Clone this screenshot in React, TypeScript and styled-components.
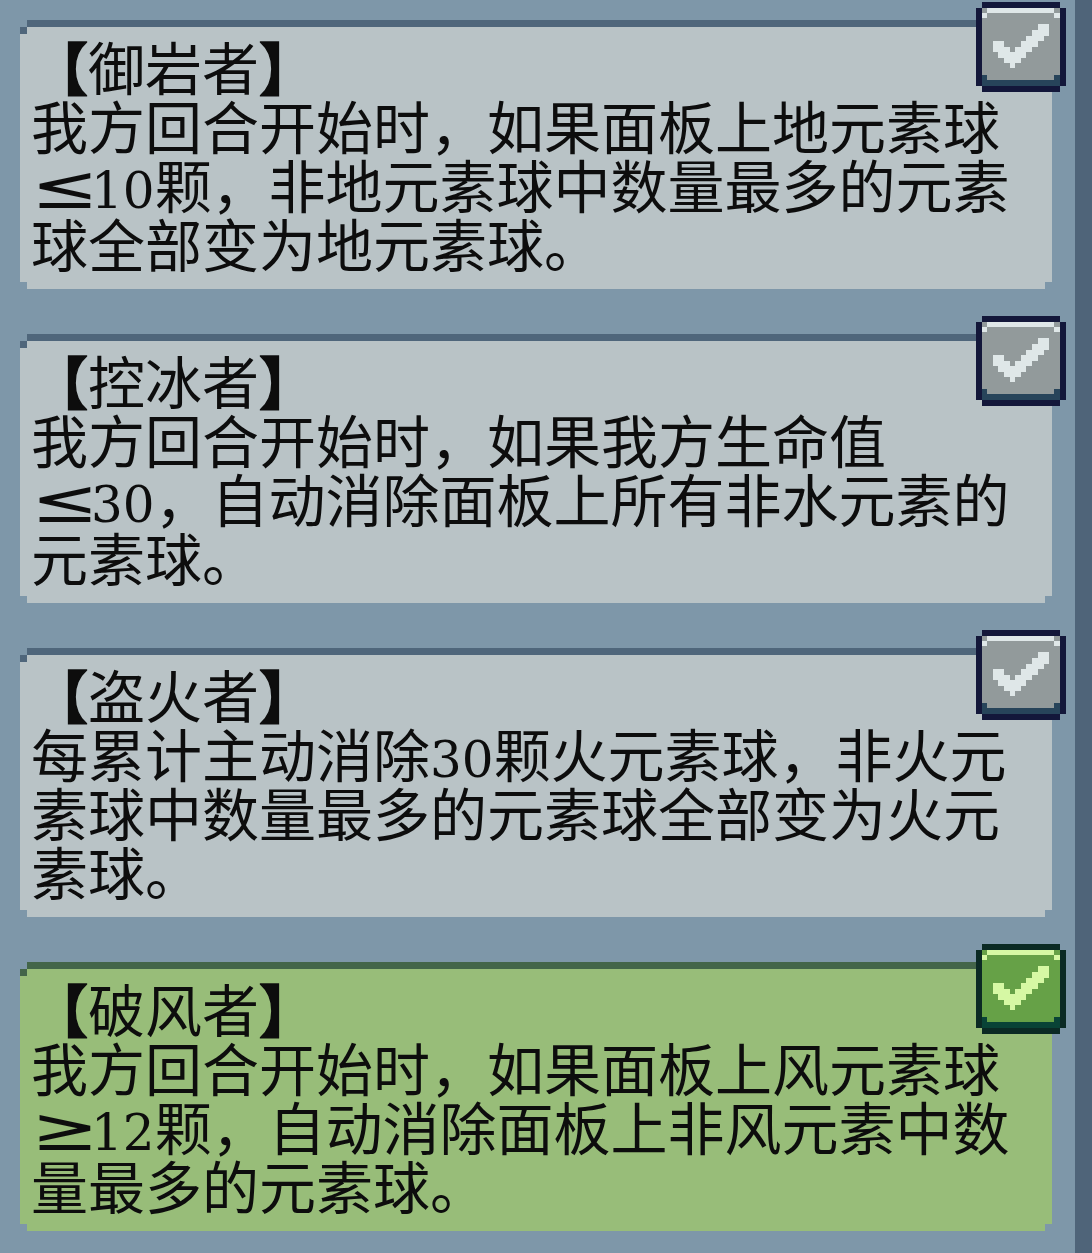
import styled, { createGlobalStyle } from 'styled-components';

const GlobalStyle = createGlobalStyle`
  html, body {
    margin: 0;
    padding: 0;
    background: #7e97a9;
    overflow: hidden;
  }
`;

const Screen = styled.div`
  display: flex;
  width: 1092px;
  height: 1253px;
  background: #7e97a9;
`;

const List = styled.div`
  flex: 1;
  display: flex;
  flex-direction: column;
  gap: 45px;
  padding: 20px 23px 0 20px;
`;

const ScrollTrack = styled.div`
  width: 17px;
  background: #4f6479;
`;

const CardWrap = styled.div`
  position: relative;
`;

type Tone = 'idle' | 'active';

const palette = {
  idle: { body: '#b9c3c6', edge: '#4f667b' },
  active: { body: '#98bd79', edge: '#436549' },
};

const Panel = styled.div<{ $tone: Tone }>`
  position: relative;
  height: 269px;
  box-sizing: border-box;
  padding: 9px 11px 0 11px;
  background: ${({ $tone }) => palette[$tone].body};
  border-top: 7px solid ${({ $tone }) => palette[$tone].edge};
  clip-path: polygon(
    7px 0, calc(100% - 7px) 0, calc(100% - 7px) 7px, 100% 7px,
    100% calc(100% - 7px), calc(100% - 7px) calc(100% - 7px),
    calc(100% - 7px) 100%, 7px 100%, 7px calc(100% - 7px),
    0 calc(100% - 7px), 0 7px, 7px 7px
  );

  &::before {
    content: '';
    position: absolute;
    left: 0;
    top: 0;
    width: 7px;
    height: 7px;
    background: ${({ $tone }) => palette[$tone].edge};
  }
`;

const Text = styled.div`
  font-family: "Noto Sans CJK SC", "Noto Sans", sans-serif;
  font-size: 57px;
  line-height: 59px;
  color: #0d0d0d;
  white-space: nowrap;
`;

const Line = styled.div`
  height: 59px;
`;

const Bracket = styled.span`
  display: inline-block;
  line-height: 59px;
  font-weight: 700;
  -webkit-text-stroke: 1.5px #0d0d0d;
`;

const Num = styled.span`
  display: inline-block;
  line-height: 59px;
  font-family: "DejaVu Serif", "Liberation Serif", serif;
  font-size: 50px;
`;

const Cmp = styled.span`
  display: inline-block;
  width: 60px;
  line-height: 59px;
  font-family: "DejaVu Sans", sans-serif;
  font-size: 60px;
  transform: scaleX(1.35);
  transform-origin: 0 50%;
`;

const CheckHolder = styled.div`
  position: absolute;
  top: -18px;
  right: -14px;
  width: 90px;
  height: 90px;
`;

const boxColors = {
  idle: { rim: '#13173a', fill: '#929a9b', light: '#dfe7e8', shade: '#27445a' },
  active: { rim: '#0b2a24', fill: '#66a147', light: '#d6f8a4', shade: '#094336' },
};

const tick: [number, number, number, number][] = [
  [62, 22, 11, 6],
  [56, 28, 17, 6],
  [50, 34, 18, 5],
  [17, 39, 11, 6],
  [45, 39, 17, 6],
  [17, 45, 17, 5],
  [39, 45, 17, 5],
  [22, 50, 28, 6],
  [28, 56, 17, 5],
  [34, 61, 5, 5],
];

function CheckBox({ tone }: { tone: Tone }) {
  const c = boxColors[tone];
  return (
    <CheckHolder>
      <svg width="90" height="90" viewBox="0 0 90 90" shapeRendering="crispEdges">
        <rect x="6" y="0" width="78" height="90" fill={c.rim} />
        <rect x="0" y="6" width="90" height="78" fill={c.rim} />
        <rect x="6" y="6" width="78" height="78" fill={c.fill} />
        <rect x="11" y="6" width="67" height="5" fill={c.light} />
        <rect x="6" y="11" width="5" height="5" fill={c.light} />
        <rect x="78" y="11" width="6" height="5" fill={c.light} />
        <rect x="6" y="78" width="78" height="6" fill={c.shade} />
        <rect x="6" y="73" width="5" height="5" fill={c.shade} />
        <rect x="78" y="73" width="6" height="5" fill={c.shade} />
        {tick.map(([x, y, w, h], i) => (
          <rect key={i} x={x} y={y} width={w} height={h} fill={c.light} />
        ))}
      </svg>
    </CheckHolder>
  );
}

function Card({ tone, name, lines }: { tone: Tone; name: string; lines: React.ReactNode[] }) {
  return (
    <CardWrap>
      <Panel $tone={tone}>
        <Text>
          <Line>
            <Bracket>【</Bracket>
            {name}
            <Bracket>】</Bracket>
          </Line>
          {lines.map((l, i) => (
            <Line key={i}>{l}</Line>
          ))}
        </Text>
      </Panel>
      <CheckBox tone={tone} />
    </CardWrap>
  );
}

export default function App() {
  return (
    <Screen>
      <GlobalStyle />
      <List>
        <Card
          tone="idle"
          name="御岩者"
          lines={[
            '我方回合开始时，如果面板上地元素球',
            <><Cmp>≤</Cmp><Num>10</Num>颗，非地元素球中数量最多的元素</>,
            '球全部变为地元素球。',
          ]}
        />
        <Card
          tone="idle"
          name="控冰者"
          lines={[
            '我方回合开始时，如果我方生命值',
            <><Cmp>≤</Cmp><Num>30</Num>，自动消除面板上所有非水元素的</>,
            '元素球。',
          ]}
        />
        <Card
          tone="idle"
          name="盗火者"
          lines={[
            <>每累计主动消除<Num>30</Num>颗火元素球，非火元</>,
            '素球中数量最多的元素球全部变为火元',
            '素球。',
          ]}
        />
        <Card
          tone="active"
          name="破风者"
          lines={[
            '我方回合开始时，如果面板上风元素球',
            <><Cmp>≥</Cmp><Num>12</Num>颗，自动消除面板上非风元素中数</>,
            '量最多的元素球。',
          ]}
        />
      </List>
      <ScrollTrack />
    </Screen>
  );
}
